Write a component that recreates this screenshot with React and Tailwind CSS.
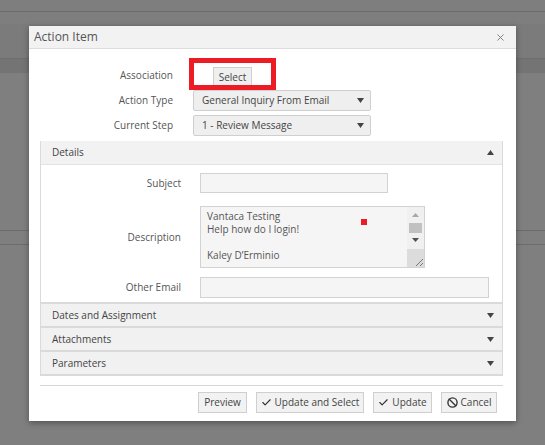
import React from 'react';
import { Check, X, Ban } from 'lucide-react';

const font = { fontFamily: '"Open Sans", "Liberation Sans", sans-serif' };

function Caret({ up }) {
  return (
    <svg width="7" height="5" viewBox="0 0 7 5" className="shrink-0">
      {up ? <path d="M0 5 L3.5 0 L7 5 Z" fill="#444" /> : <path d="M0 0 L7 0 L3.5 5 Z" fill="#444" />}
    </svg>
  );
}

function SelectBox({ value }) {
  return (
    <div className="flex h-[21px] w-[178px] items-center justify-between rounded-[2px] border border-[#cfcfcf] bg-[#efefef] pl-[8px] pr-[6px] text-[10px] text-[#444]">
      <span>{value}</span>
      <Caret />
    </div>
  );
}

function Section({ title, open }) {
  return (
    <div className="flex h-[24px] items-center justify-between border-t-2 border-[#dadada] bg-[#f1f1f1] pl-[11px] pr-[8px] text-[10px] text-[#444]">
      <span>{title}</span>
      <Caret up={open} />
    </div>
  );
}

function Btn({ icon, children, w }) {
  return (
    <button className={`flex h-[21px] items-center justify-center gap-[3px] border border-[#cfcfcf] bg-[#f2f2f2] text-[10px] text-[#444] ${w}`}>
      {icon}
      {children}
    </button>
  );
}

export default function App() {
  return (
    <div style={font} className="relative h-[445px] w-[545px] overflow-hidden bg-[#7f7f7f]">
      {/* dimmed page behind the dialog */}
      <div className="h-[11px] bg-[#7e7e7e]" />
      <div className="h-px bg-[#6c6c6c]" />
      <div className="h-[12px] bg-[#7e7e7e]" />
      <div className="h-[34px] bg-[#7b7b7b]" />
      <div className="h-px bg-[#6e6e6e]" />
      <div className="h-[14px] bg-[#747474]" />
      <div className="h-[157px] bg-[#7f7f7f]" />
      <div className="h-px bg-[#6c6c6c]" />
      <div className="h-[13px] bg-[#7f7f7f]" />
      <div className="h-px bg-[#6c6c6c]" />

      <div className="absolute left-[29px] top-[26px] flex h-[395px] w-[487px] flex-col bg-white shadow-[0_2px_6px_rgba(0,0,0,0.35)]">
        <div className="flex h-[23px] shrink-0 items-center justify-between border-b border-[#dcdcdc] bg-[#f2f2f2] pl-[5px] pr-[10px]">
          <span className="text-[12px] text-[#555]">Action Item</span>
          <X size={11} strokeWidth={2} color="#7a7a7a" />
        </div>

        <div className="flex flex-col pl-[11px] pr-[13px] pt-[16px]">
          <div className="flex flex-col gap-[4px]">
            <div className="flex h-[21px] items-center gap-[20px]">
              <span className="w-[133px] text-right text-[10px] text-[#555]">Association</span>
              <div className="relative ml-[20px]">
                <button className="h-[21px] w-[39px] border border-[#cfcfcf] bg-[#efefef] text-[10px] text-[#444]">Select</button>
                <div className="pointer-events-none absolute left-[-24px] top-[-5px] h-[32px] w-[87px] border-[5px] border-[#ed1c24]" />
              </div>
            </div>
            <div className="flex h-[21px] items-center gap-[20px]">
              <span className="w-[133px] text-right text-[10px] text-[#555]">Action Type</span>
              <SelectBox value="General Inquiry From Email" />
            </div>
            <div className="flex h-[21px] items-center gap-[20px]">
              <span className="w-[133px] text-right text-[10px] text-[#555]">Current Step</span>
              <SelectBox value="1 - Review Message" />
            </div>
          </div>

          <div className="mt-[5px] border-x border-b-2 border-[#dadada]">
            <div className="flex h-[24px] items-center justify-between border-b border-[#e2e2e2] bg-[#f2f2f2] pl-[11px] pr-[8px] text-[10px] text-[#444]">
              <span>Details</span>
              <Caret up />
            </div>
            <div className="flex flex-col pb-[4px] pt-[8px]">
              <div className="flex items-center gap-[19px]">
                <span className="w-[140px] text-right text-[10px] text-[#555]">Subject</span>
                <div className="h-[20px] w-[188px] border border-[#d2d2d2] bg-[#f5f5f5]" />
              </div>
              <div className="mt-[13px] flex items-center gap-[19px]">
                <span className="w-[140px] text-right text-[10px] text-[#555]">Description</span>
                <div className="relative flex h-[62px] w-[225px] border border-[#d2d2d2] bg-[#f5f5f5]">
                  <div className="flex-1 pl-[6px] pt-[3px] text-[10px] leading-[13px] text-[#555]">
                    <div>Vantaca Testing</div>
                    <div>Help how do I login!</div>
                    <div>&nbsp;</div>
                    <div>Kaley D’Erminio</div>
                  </div>
                  <div className="absolute left-[160px] top-[12px] h-[6px] w-[6px] bg-[#ed1c24]" />
                  <div className="flex w-[17px] flex-col items-center bg-[#f0f0f0]">
                    <svg width="7" height="4" viewBox="0 0 7 4" className="mt-[6px]"><path d="M0 4 L3.5 0 L7 4 Z" fill="#a8a8a8" /></svg>
                    <div className="mt-[6px] h-[10px] w-[13px] bg-[#c1c1c1]" />
                    <svg width="7" height="4" viewBox="0 0 7 4" className="mt-[5px]"><path d="M0 0 L7 0 L3.5 4 Z" fill="#505050" /></svg>
                    <div className="mt-auto flex h-[18px] w-[17px] items-end justify-end bg-[#dcdcdc]">
                      <svg width="10" height="10" viewBox="0 0 10 10"><path d="M9 2 L2 9 M9 6 L6 9" stroke="#777" strokeWidth="1" /></svg>
                    </div>
                  </div>
                </div>
              </div>
              <div className="mt-[9px] flex items-center gap-[19px]">
                <span className="w-[140px] text-right text-[10px] text-[#555]">Other Email</span>
                <div className="h-[21px] w-[289px] border border-[#d2d2d2] bg-[#f5f5f5]" />
              </div>
            </div>
            <Section title="Dates and Assignment" />
            <Section title="Attachments" />
            <Section title="Parameters" />
          </div>

          <div className="mt-[9px] border-t border-[#d6d6d6]" />
          <div className="flex justify-end gap-[9px] pr-[6px] pt-[6px]">
            <Btn w="w-[49px]">Preview</Btn>
            <Btn w="w-[108px]" icon={<Check size={11} strokeWidth={2.5} color="#333" />}>Update and Select</Btn>
            <Btn w="w-[59px]" icon={<Check size={11} strokeWidth={2.5} color="#333" />}>Update</Btn>
            <Btn w="w-[56px]" icon={<Ban size={11} strokeWidth={3} color="#333" />}>Cancel</Btn>
          </div>
        </div>
      </div>
    </div>
  );
}
